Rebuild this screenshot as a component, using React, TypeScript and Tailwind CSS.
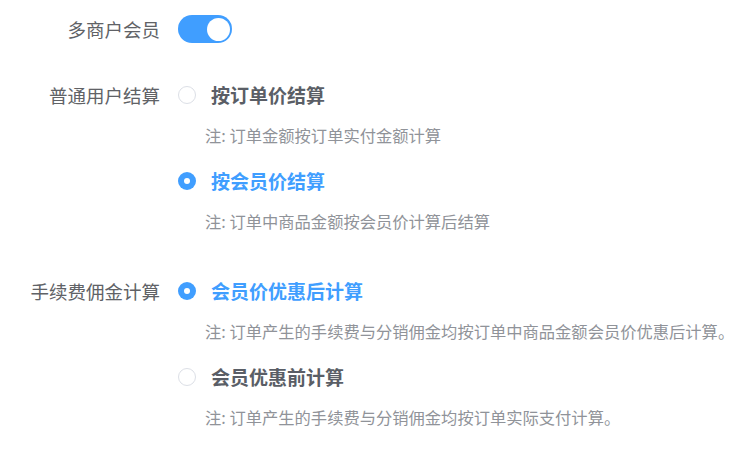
import React from 'react'

const FONT = { fontFamily: '"Noto Sans CJK SC", "Noto Sans", sans-serif' }

function Radio({ checked }: { checked: boolean }) {
  return checked ? (
    <span className="w-[18px] h-[18px] rounded-full bg-[#409eff] flex items-center justify-center shrink-0">
      <span className="w-[6px] h-[6px] rounded-full bg-white" />
    </span>
  ) : (
    <span className="w-[18px] h-[18px] rounded-full border border-[#dcdfe6] bg-white shrink-0" />
  )
}

function Option({ checked, label, note, className = '' }: { checked: boolean; label: string; note: string; className?: string }) {
  return (
    <div className={className}>
      <div className="flex items-center h-[28px]">
        <Radio checked={checked} />
        <span className={`ml-[15px] text-[19px] font-semibold ${checked ? 'text-[#409eff]' : 'text-[#5a5e66]'}`}>{label}</span>
      </div>
      <div className="mt-[14px] ml-[27px] h-[24px] leading-[24px] text-[16.3px] text-[#909399] whitespace-nowrap">{note}</div>
    </div>
  )
}

function Row({ label, children, className = '' }: { label: string; children: React.ReactNode; className?: string }) {
  return (
    <div className={`flex items-start ${className}`}>
      <div className="w-[160px] h-[28px] leading-[28px] text-right text-[18.5px] text-[#606266] shrink-0">{label}</div>
      <div className="ml-[18px]">{children}</div>
    </div>
  )
}

export default function App() {
  return (
    <div className="w-[754px] h-[453px] bg-white pt-[15px]" style={FONT}>
      <Row label="多商户会员">
        <div className="w-[54px] h-[28px] rounded-full bg-[#409eff] flex items-center justify-end pr-[2px]">
          <span className="w-[23px] h-[23px] rounded-full bg-white" />
        </div>
      </Row>
      <Row label="普通用户结算" className="mt-[38px]">
        <Option checked={false} label="按订单价结算" note="注: 订单金额按订单实付金额计算" />
        <Option checked label="按会员价结算" note="注: 订单中商品金额按会员价计算后结算" className="mt-[20px]" />
      </Row>
      <Row label="手续费佣金计算" className="mt-[44px]">
        <Option checked label="会员价优惠后计算" note="注: 订单产生的手续费与分销佣金均按订单中商品金额会员价优惠后计算。" />
        <Option checked={false} label="会员优惠前计算" note="注: 订单产生的手续费与分销佣金均按订单实际支付计算。" className="mt-[20px]" />
      </Row>
    </div>
  )
}
